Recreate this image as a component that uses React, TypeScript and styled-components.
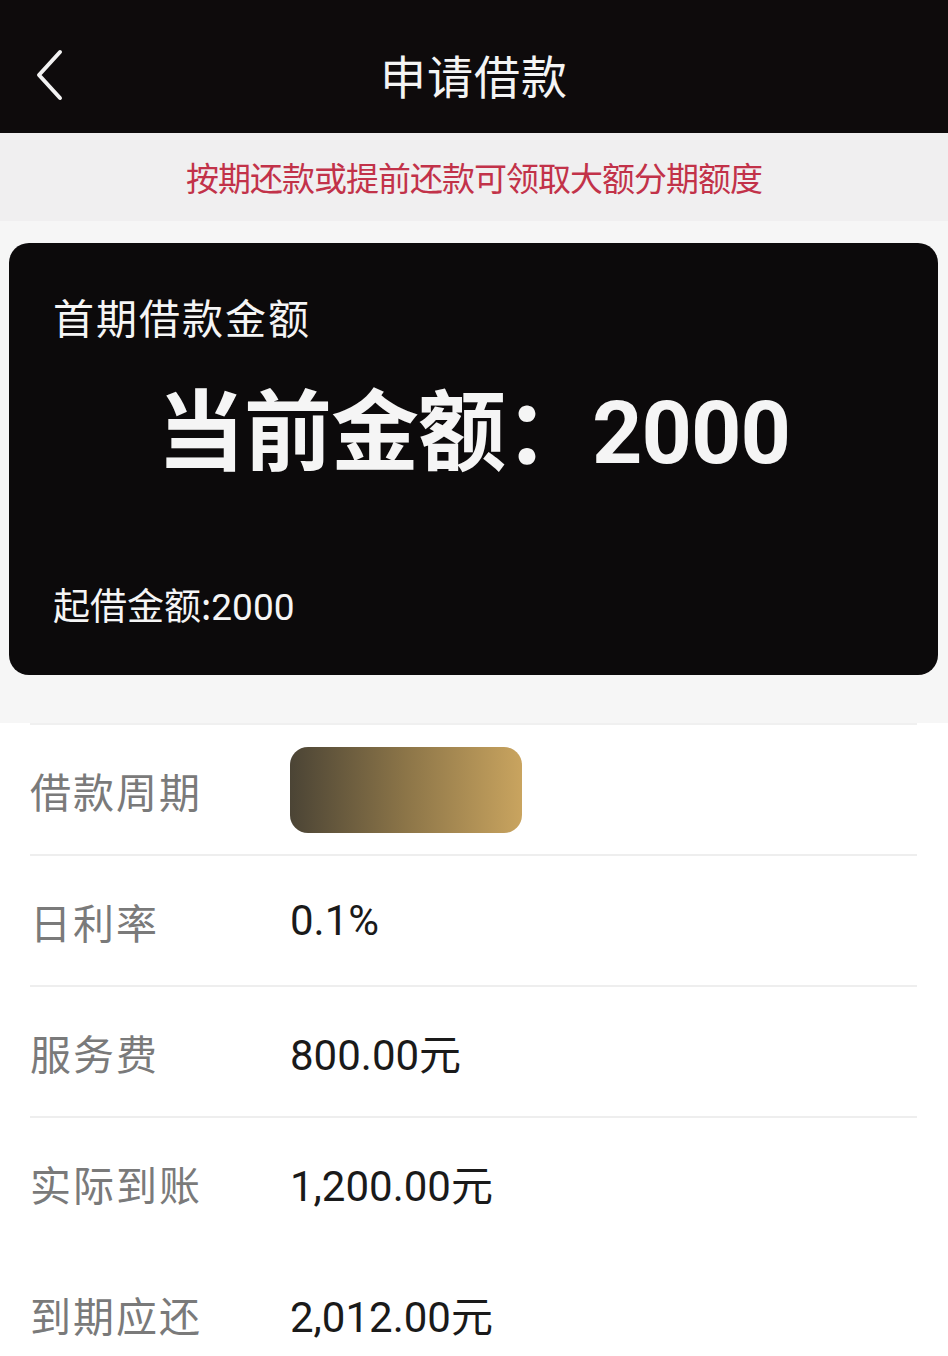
import React from "react";
import styled, { createGlobalStyle } from "styled-components";

const Global = createGlobalStyle`
  body {
    margin: 0;
    background: #ffffff;
    font-family: "Noto Sans CJK SC", "Noto Sans", sans-serif;
  }
`;

const Page = styled.div`
  width: 948px;
  min-height: 1356px;
  display: flex;
  flex-direction: column;
  background: #ffffff;
`;

const Header = styled.div`
  height: 133px;
  background: #0e0b0c;
  display: flex;
  align-items: center;
  justify-content: center;
  position: relative;
`;

const BackButton = styled.div`
  position: absolute;
  left: 32px;
  top: 48px;
  width: 34px;
  height: 54px;
`;

const Title = styled.div`
  color: #f4f4f4;
  font-size: 46px;
  letter-spacing: 1px;
  margin-top: 14px;
`;

const Notice = styled.div`
  height: 88px;
  background: #f0eff0;
  display: flex;
  align-items: center;
  justify-content: center;
  color: #c23249;
  font-size: 33px;
  letter-spacing: -1px;
`;

const Upper = styled.div`
  background: #f6f6f6;
  padding: 22px 10px 48px 9px;
`;

const Card = styled.div`
  height: 432px;
  background: #0c0a0b;
  border-radius: 20px;
  display: flex;
  flex-direction: column;
  padding: 0 44px;
  box-sizing: border-box;
  color: #f5f5f5;
`;

const CardLabel = styled.div`
  font-size: 41px;
  letter-spacing: 2px;
  margin-top: 46px;
  line-height: 54px;
`;

const Amount = styled.div`
  font-size: 88px;
  font-weight: 700;
  text-align: center;
  line-height: 100px;
  margin-top: 32px;
  letter-spacing: -1px;
  font-family: "Noto Sans CJK SC", sans-serif;
  span {
    font-family: Roboto, "Noto Sans", sans-serif;
    font-weight: 700;
  }
`;

const CardFoot = styled.div`
  font-size: 37px;
  margin-top: auto;
  margin-bottom: 42px;
  line-height: 50px;
  span {
    font-family: Roboto, sans-serif;
  }
`;

const List = styled.div`
  margin: 0 31px 0 30px;
  border-top: 2px solid #f0f0f0;
`;

const Row = styled.div<{ $line?: boolean }>`
  height: 129px;
  display: flex;
  align-items: center;
  border-bottom: 2px solid ${(p) => (p.$line ? "#eeeeee" : "transparent")};
`;

const Label = styled.div`
  width: 260px;
  color: #7a7a7a;
  font-size: 41px;
  letter-spacing: 2px;
`;

const Value = styled.div`
  color: #1a1a1a;
  font-size: 42px;
  font-family: Roboto, "Noto Sans CJK SC", sans-serif;
`;

const Yuan = styled.span`
  font-family: "Noto Sans CJK SC", sans-serif;
`;

const PeriodPill = styled.div`
  width: 232px;
  height: 86px;
  border-radius: 18px;
  background: linear-gradient(90deg, #4b4435 0%, #8c7548 50%, #c9a45f 100%);
`;

const rows: { label: string; value: string }[] = [
  { label: "日利率", value: "0.1%" },
  { label: "服务费", value: "800.00" },
  { label: "实际到账", value: "1,200.00" },
  { label: "到期应还", value: "2,012.00" },
];

export default function App() {
  return (
    <Page>
      <Global />
      <Header>
        <BackButton>
          <svg width="34" height="54" viewBox="0 0 34 54">
            <path d="M28 4 L7 27 L28 50" fill="none" stroke="#f2f2f2" strokeWidth="4" strokeLinecap="round" strokeLinejoin="round" />
          </svg>
        </BackButton>
        <Title>申请借款</Title>
      </Header>
      <Notice>按期还款或提前还款可领取大额分期额度</Notice>
      <Upper>
        <Card>
          <CardLabel>首期借款金额</CardLabel>
          <Amount>
            当前金额：<span>2000</span>
          </Amount>
          <CardFoot>
            起借金额:<span>2000</span>
          </CardFoot>
        </Card>
      </Upper>
      <List>
        <Row $line>
          <Label>借款周期</Label>
          <PeriodPill />
        </Row>
        {rows.map((r, i) => (
          <Row key={r.label} $line={i < 2}>
            <Label>{r.label}</Label>
            <Value>
              {r.value}
              {r.value.includes("%") ? null : <Yuan>元</Yuan>}
            </Value>
          </Row>
        ))}
      </List>
    </Page>
  );
}
